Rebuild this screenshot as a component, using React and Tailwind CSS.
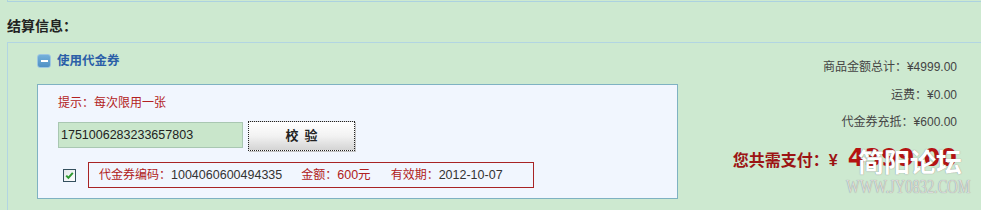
import React from "react";

const F = { fontFamily: '"Liberation Sans", "Noto Sans CJK SC", sans-serif' };

function MinusIcon() {
  return (
    <div className="w-[14px] h-[14px] rounded-[3px] border border-[#9cc6e2] bg-gradient-to-b from-[#74b0da] to-[#4f90c4] flex items-center justify-center">
      <div className="w-[7px] h-[2px] bg-white" />
    </div>
  );
}

function CheckBox() {
  return (
    <div className="w-[13px] h-[13px] border border-[#34505e] bg-gradient-to-br from-[#e4e8ea] to-white flex items-center justify-center">
      <svg width="9" height="9" viewBox="0 0 9 9">
        <path d="M1.2 4.6 L3.4 6.8 L7.8 1.8" fill="none" stroke="#2f9a2f" strokeWidth="2" />
      </svg>
    </div>
  );
}

export default function App() {
  return (
    <div className="relative w-[981px] h-[210px] overflow-hidden bg-[#cde9d0] text-[#333]" style={F}>
      {/* previous box bottom edge */}
      <div className="ml-[7px] h-[2px] border-l border-b border-[#acd2e0]" />

      <div className="pl-[7px] pt-[15px] h-[40px] text-[14px] leading-[18px] font-bold text-[#222]">
        结算信息：
      </div>

      <div className="ml-[7px] border-l border-t border-[#b2d5e2] h-[200px] flex">
        {/* left */}
        <div className="pl-[29px] pt-[10px] w-[671px] shrink-0">
          <div className="flex items-center gap-[6px] h-[16px]">
            <MinusIcon />
            <span className="text-[12.5px] font-bold text-[#2b5fa8] leading-[16px]">使用代金券</span>
          </div>

          <div className="mt-[15px] w-[641px] border border-[#7fb2c2] bg-[#f1f6fe] pl-[20px] pt-[9px] pb-[10px]">
            <div className="text-[12px] leading-[18px] text-[#b32222]">提示：每次限用一张</div>

            <div className="mt-[9px] flex items-start gap-[5px]">
              <div className="mt-[1px] w-[185px] h-[26px] border border-[#a9c7b2] bg-[#c9e6cb] pl-[2px] flex items-center text-[12.5px] text-[#222]">
                1751006283233657803
              </div>
              <div className="w-[107px] h-[30px] border border-dotted border-[#222] bg-gradient-to-b from-white via-[#f2f2f2] to-[#d4d4d4] shadow-[1px_1px_0_#c4c4c4] flex items-center justify-center text-[13px] font-bold text-[#222] tracking-[6px] pl-[6px]">
                校验
              </div>
            </div>

            <div className="mt-[11px] flex items-center">
              <div className="ml-[5px] mr-[12px]">
                <CheckBox />
              </div>
              <div className="w-[446px] h-[26px] border border-[#a82424] pl-[10px] flex items-center text-[12.5px] whitespace-nowrap">
                <span className="text-[#b02020] text-[12px]">代金券编码：</span>
                <span className="text-[#333]">1004060600494335</span>
                <span className="ml-[19px] text-[#b02020] text-[12px]">金额：</span>
                <span className="text-[#b02020]">600元</span>
                <span className="ml-[20px] text-[#b02020] text-[12px]">有效期：</span>
                <span className="text-[#333]">2012-10-07</span>
              </div>
            </div>
          </div>
        </div>

        {/* right */}
        <div className="flex-1 pr-[24px] pt-[15px] text-right text-[12px] leading-[18px] text-[#444]">
          <div>商品金额总计：¥4999.00</div>
          <div className="mt-[10px]">运费：¥0.00</div>
          <div className="mt-[9px]">代金券充抵：¥600.00</div>
          <div className="mt-[12px] flex justify-end items-baseline whitespace-nowrap">
            <span className="text-[16px] font-bold text-[#9c1414] leading-[30px]">您共需支付：¥</span>
            <span className="ml-[10px] text-[24px] font-bold text-[#b51212] leading-[30px]" style={{ fontFamily: '"DejaVu Sans", sans-serif' }}>
              4399.00
            </span>
          </div>
        </div>
      </div>

      {/* watermark */}
      <div className="absolute left-[858px] top-[148px] pointer-events-none">
        <div className="text-[26px] leading-[30px] font-bold text-white whitespace-nowrap [text-shadow:0_0_1px_#777]">
          简阳论坛
        </div>
        <div
          className="-ml-[12px] text-[19px] leading-[18px] text-[#dadada] whitespace-nowrap origin-left scale-x-[0.76] [text-shadow:0_0_1px_#888]"
          style={{ fontFamily: '"Liberation Serif", serif' }}
        >
          WWW.JY0832.COM
        </div>
      </div>
    </div>
  );
}
